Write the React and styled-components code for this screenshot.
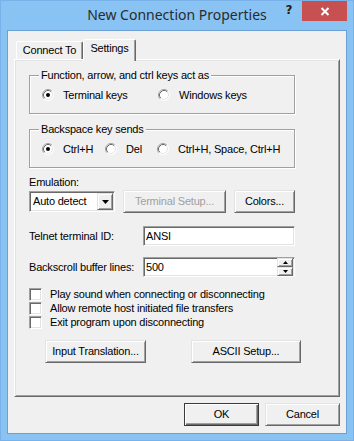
import React from "react";
import styled, { createGlobalStyle } from "styled-components";

const Global = createGlobalStyle`
  html, body { margin: 0; padding: 0; background: #ffffff; }
  body { font-family: "Liberation Sans", Arial, sans-serif; }
  * { box-sizing: border-box; }
`;

const Window = styled.div`
  width: 354px;
  height: 441px;
  background: #88c3f4;
  padding: 0 7px 7px;
  display: flex;
  flex-direction: column;
  box-shadow: inset 0 0 0 1px #78b2e8;
`;

const TitleBar = styled.div`
  height: 30px;
  flex: none;
  display: grid;
  grid-template-columns: 1fr auto 1fr;
  align-items: start;
`;

const Title = styled.div`
  grid-column: 2;
  font-family: "Noto Sans", "Open Sans", sans-serif;
  font-size: 14px;
  line-height: 30px;
  color: #2b2b2b;
  white-space: nowrap;
`;

const Controls = styled.div`
  grid-column: 3;
  justify-self: end;
  display: flex;
`;

const HelpButton = styled.div`
  width: 26px;
  height: 21px;
  font-family: "DejaVu Sans", sans-serif;
  font-weight: bold;
  font-size: 12px;
  line-height: 21px;
  text-align: center;
  color: #1e1e1e;
`;

const CloseButton = styled.div`
  width: 45px;
  height: 20px;
  margin-top: 1px;
  background: #c75050;
  display: flex;
  align-items: center;
  justify-content: center;
`;

const Client = styled.div`
  flex: 1;
  border: 1px solid #6c9fd3;
  background: #f0f0f0;
  padding: 7px 6px;
  display: flex;
  flex-direction: column;
  font-size: 11px;
  letter-spacing: -0.2px;
  color: #000;
`;

const TabStrip = styled.div`
  height: 21px;
  flex: none;
  display: flex;
  align-items: flex-end;
  padding-left: 2px;
`;

const Tab = styled.div`
  width: ${(p) => (p.$active ? 53 : 67)}px;
  height: ${(p) => (p.$active ? 22 : 18)}px;
  margin-bottom: ${(p) => (p.$active ? -2 : 0)}px;
  position: relative;
  z-index: ${(p) => (p.$active ? 1 : 0)};
  background: #f0f0f0;
  border-top: 1px solid #ffffff;
  border-left: 1px solid #ffffff;
  border-right: 1px solid #696969;
  box-shadow: inset -1px 0 0 #a0a0a0;
  border-radius: 2px 2px 0 0;
  padding-top: 2px;
  line-height: 13px;
  text-align: center;
  white-space: nowrap;
`;

const Panel = styled.div`
  height: 338px;
  flex: none;
  position: relative;
  border: 1px solid;
  border-color: #ffffff #696969 #696969 #ffffff;
  box-shadow: inset 1px 1px 0 #e3e3e3, inset -1px -1px 0 #a0a0a0;
  padding: 15px 0 0 14px;
  display: flex;
  flex-direction: column;
  align-items: flex-start;
`;

const GroupBox = styled.div`
  width: 266px;
  margin-top: ${(p) => p.$mt || 0}px;
  border: 1px solid #a0a0a0;
  box-shadow: 1px 1px 0 #ffffff, inset 1px 1px 0 #ffffff;
  padding: 0 0 11px 12px;
`;

const Legend = styled.div`
  width: fit-content;
  margin: -7px 0 0 -3px;
  padding: 0 2px;
  background: #f0f0f0;
  line-height: 13px;
  height: 13px;
  white-space: nowrap;
`;

const RadioRow = styled.div`
  display: flex;
  align-items: center;
  height: 14px;
  margin-top: 6px;
`;

const Option = styled.div`
  display: flex;
  align-items: center;
  gap: 9px;
  width: ${(p) => (p.$w ? `${p.$w}px` : "auto")};
  white-space: nowrap;
  line-height: 13px;
`;

const FieldLabel = styled.div`
  margin-top: ${(p) => p.$mt || 0}px;
  line-height: 13px;
  width: ${(p) => (p.$w ? `${p.$w}px` : "auto")};
  white-space: nowrap;
`;

const ControlRow = styled.div`
  display: flex;
  align-items: center;
  gap: ${(p) => p.$gap || 0}px;
  margin-top: ${(p) => p.$mt || 0}px;
`;

const sunken = `
  border: 1px solid;
  border-color: #a0a0a0 #ffffff #ffffff #a0a0a0;
  box-shadow: inset 1px 1px 0 #696969, inset -1px -1px 0 #e3e3e3;
  padding: 1px;
  background: #ffffff;
`;

const raised = `
  border: 1px solid;
  border-color: #e3e3e3 #696969 #696969 #e3e3e3;
  box-shadow: inset 1px 1px 0 #ffffff, inset -1px -1px 0 #a0a0a0;
  background: #f0f0f0;
`;

const Combo = styled.div`
  ${sunken}
  width: 86px;
  height: 21px;
  display: flex;
  align-items: stretch;
`;

const ComboText = styled.div`
  flex: 1;
  padding-left: 2px;
  line-height: 17px;
  white-space: nowrap;
`;

const DropButton = styled.div`
  ${raised}
  width: 16px;
  display: flex;
  align-items: center;
  justify-content: center;
`;

const Button = styled.div`
  ${raised}
  width: ${(p) => p.$w}px;
  height: 23px;
  line-height: 21px;
  text-align: center;
  white-space: nowrap;
  color: ${(p) => (p.$disabled ? "#a0a0a0" : "#000")};
  ${(p) =>
    p.$default &&
    `
    border: 1px solid #3a3a3a;
    box-shadow: inset 1px 1px 0 #ffffff, inset -1px -1px 0 #696969, inset -2px -2px 0 #a0a0a0;
  `}
`;

const TextInput = styled.div`
  ${sunken}
  width: 152px;
  height: 20px;
  display: flex;
  align-items: stretch;
  padding-left: 2px;
`;

const InputText = styled.div`
  flex: 1;
  line-height: 16px;
`;

const Spin = styled.div`
  width: 16px;
  margin: -1px 0;
  display: flex;
  flex-direction: column;
`;

const SpinButton = styled.div`
  ${raised}
  height: 9px;
  display: flex;
  align-items: center;
  justify-content: center;
`;

const CheckList = styled.div`
  display: flex;
  flex-direction: column;
  margin-top: 10px;
`;

const CheckRow = styled.div`
  height: 14px;
  display: flex;
  align-items: center;
  gap: 8px;
  line-height: 13px;
  white-space: nowrap;
`;

const CheckBox = styled.span`
  ${sunken}
  width: 13px;
  height: 13px;
  flex: none;
`;

const ButtonRow = styled.div`
  display: flex;
  gap: 45px;
  margin-top: 11px;
  padding-left: 16px;
`;

const Footer = styled.div`
  display: flex;
  justify-content: flex-end;
  gap: 6px;
  margin-top: 6px;
`;

const Radio = ({ checked }) => (
  <svg width="12" height="12" viewBox="0 0 12 12" style={{ flex: "none" }}>
    <circle cx="6" cy="6" r="5.5" fill="#ffffff" />
    <path d="M2.11 9.89 A5.5 5.5 0 0 1 9.89 2.11" fill="none" stroke="#a0a0a0" />
    <path d="M9.89 2.11 A5.5 5.5 0 0 1 2.11 9.89" fill="none" stroke="#ffffff" />
    <path d="M2.82 9.18 A4.5 4.5 0 0 1 9.18 2.82" fill="none" stroke="#696969" />
    <path d="M9.18 2.82 A4.5 4.5 0 0 1 2.82 9.18" fill="none" stroke="#e3e3e3" />
    {checked && <circle cx="6" cy="6" r="2" fill="#000000" />}
  </svg>
);

const Arrow = ({ up, w = 7, h = 4 }) => (
  <svg width={w} height={h} viewBox={`0 0 ${w} ${h}`}>
    <polygon
      points={up ? `0,${h} ${w},${h} ${w / 2},0` : `0,0 ${w},0 ${w / 2},${h}`}
      fill="#000"
    />
  </svg>
);

export default function App() {
  return (
    <>
      <Global />
      <Window>
        <TitleBar>
          <Title>New Connection Properties</Title>
          <Controls>
            <HelpButton>?</HelpButton>
            <CloseButton>
              <svg width="10" height="9" viewBox="0 0 10 9">
                <path d="M1.5 1 L8.5 8 M8.5 1 L1.5 8" stroke="#ffffff" strokeWidth="2" />
              </svg>
            </CloseButton>
          </Controls>
        </TitleBar>
        <Client>
          <TabStrip>
            <Tab>Connect To</Tab>
            <Tab $active>Settings</Tab>
          </TabStrip>
          <Panel>
            <GroupBox>
              <Legend>Function, arrow, and ctrl keys act as</Legend>
              <RadioRow>
                <Option $w={116}>
                  <Radio checked />
                  Terminal keys
                </Option>
                <Option>
                  <Radio />
                  Windows keys
                </Option>
              </RadioRow>
            </GroupBox>
            <GroupBox $mt={15}>
              <Legend>Backspace key sends</Legend>
              <RadioRow>
                <Option $w={63}>
                  <Radio checked />
                  Ctrl+H
                </Option>
                <Option $w={52}>
                  <Radio />
                  Del
                </Option>
                <Option>
                  <Radio />
                  Ctrl+H, Space, Ctrl+H
                </Option>
              </RadioRow>
            </GroupBox>
            <FieldLabel $mt={8}>Emulation:</FieldLabel>
            <ControlRow $mt={1} $gap={8}>
              <Combo>
                <ComboText>Auto detect</ComboText>
                <DropButton>
                  <Arrow />
                </DropButton>
              </Combo>
              <Button $w={103} $disabled>
                Terminal Setup...
              </Button>
              <Button $w={61}>Colors...</Button>
            </ControlRow>
            <ControlRow $mt={13}>
              <FieldLabel $w={114}>Telnet terminal ID:</FieldLabel>
              <TextInput>
                <InputText>ANSI</InputText>
              </TextInput>
            </ControlRow>
            <ControlRow $mt={11}>
              <FieldLabel $w={114}>Backscroll buffer lines:</FieldLabel>
              <TextInput>
                <InputText>500</InputText>
                <Spin>
                  <SpinButton>
                    <Arrow up w={5} h={3} />
                  </SpinButton>
                  <SpinButton>
                    <Arrow w={5} h={3} />
                  </SpinButton>
                </Spin>
              </TextInput>
            </ControlRow>
            <CheckList>
              <CheckRow>
                <CheckBox />
                Play sound when connecting or disconnecting
              </CheckRow>
              <CheckRow>
                <CheckBox />
                Allow remote host initiated file transfers
              </CheckRow>
              <CheckRow>
                <CheckBox />
                Exit program upon disconnecting
              </CheckRow>
            </CheckList>
            <ButtonRow>
              <Button $w={101}>Input Translation...</Button>
              <Button $w={110}>ASCII Setup...</Button>
            </ButtonRow>
          </Panel>
          <Footer>
            <Button $w={75} $default>
              OK
            </Button>
            <Button $w={75}>Cancel</Button>
          </Footer>
        </Client>
      </Window>
    </>
  );
}
